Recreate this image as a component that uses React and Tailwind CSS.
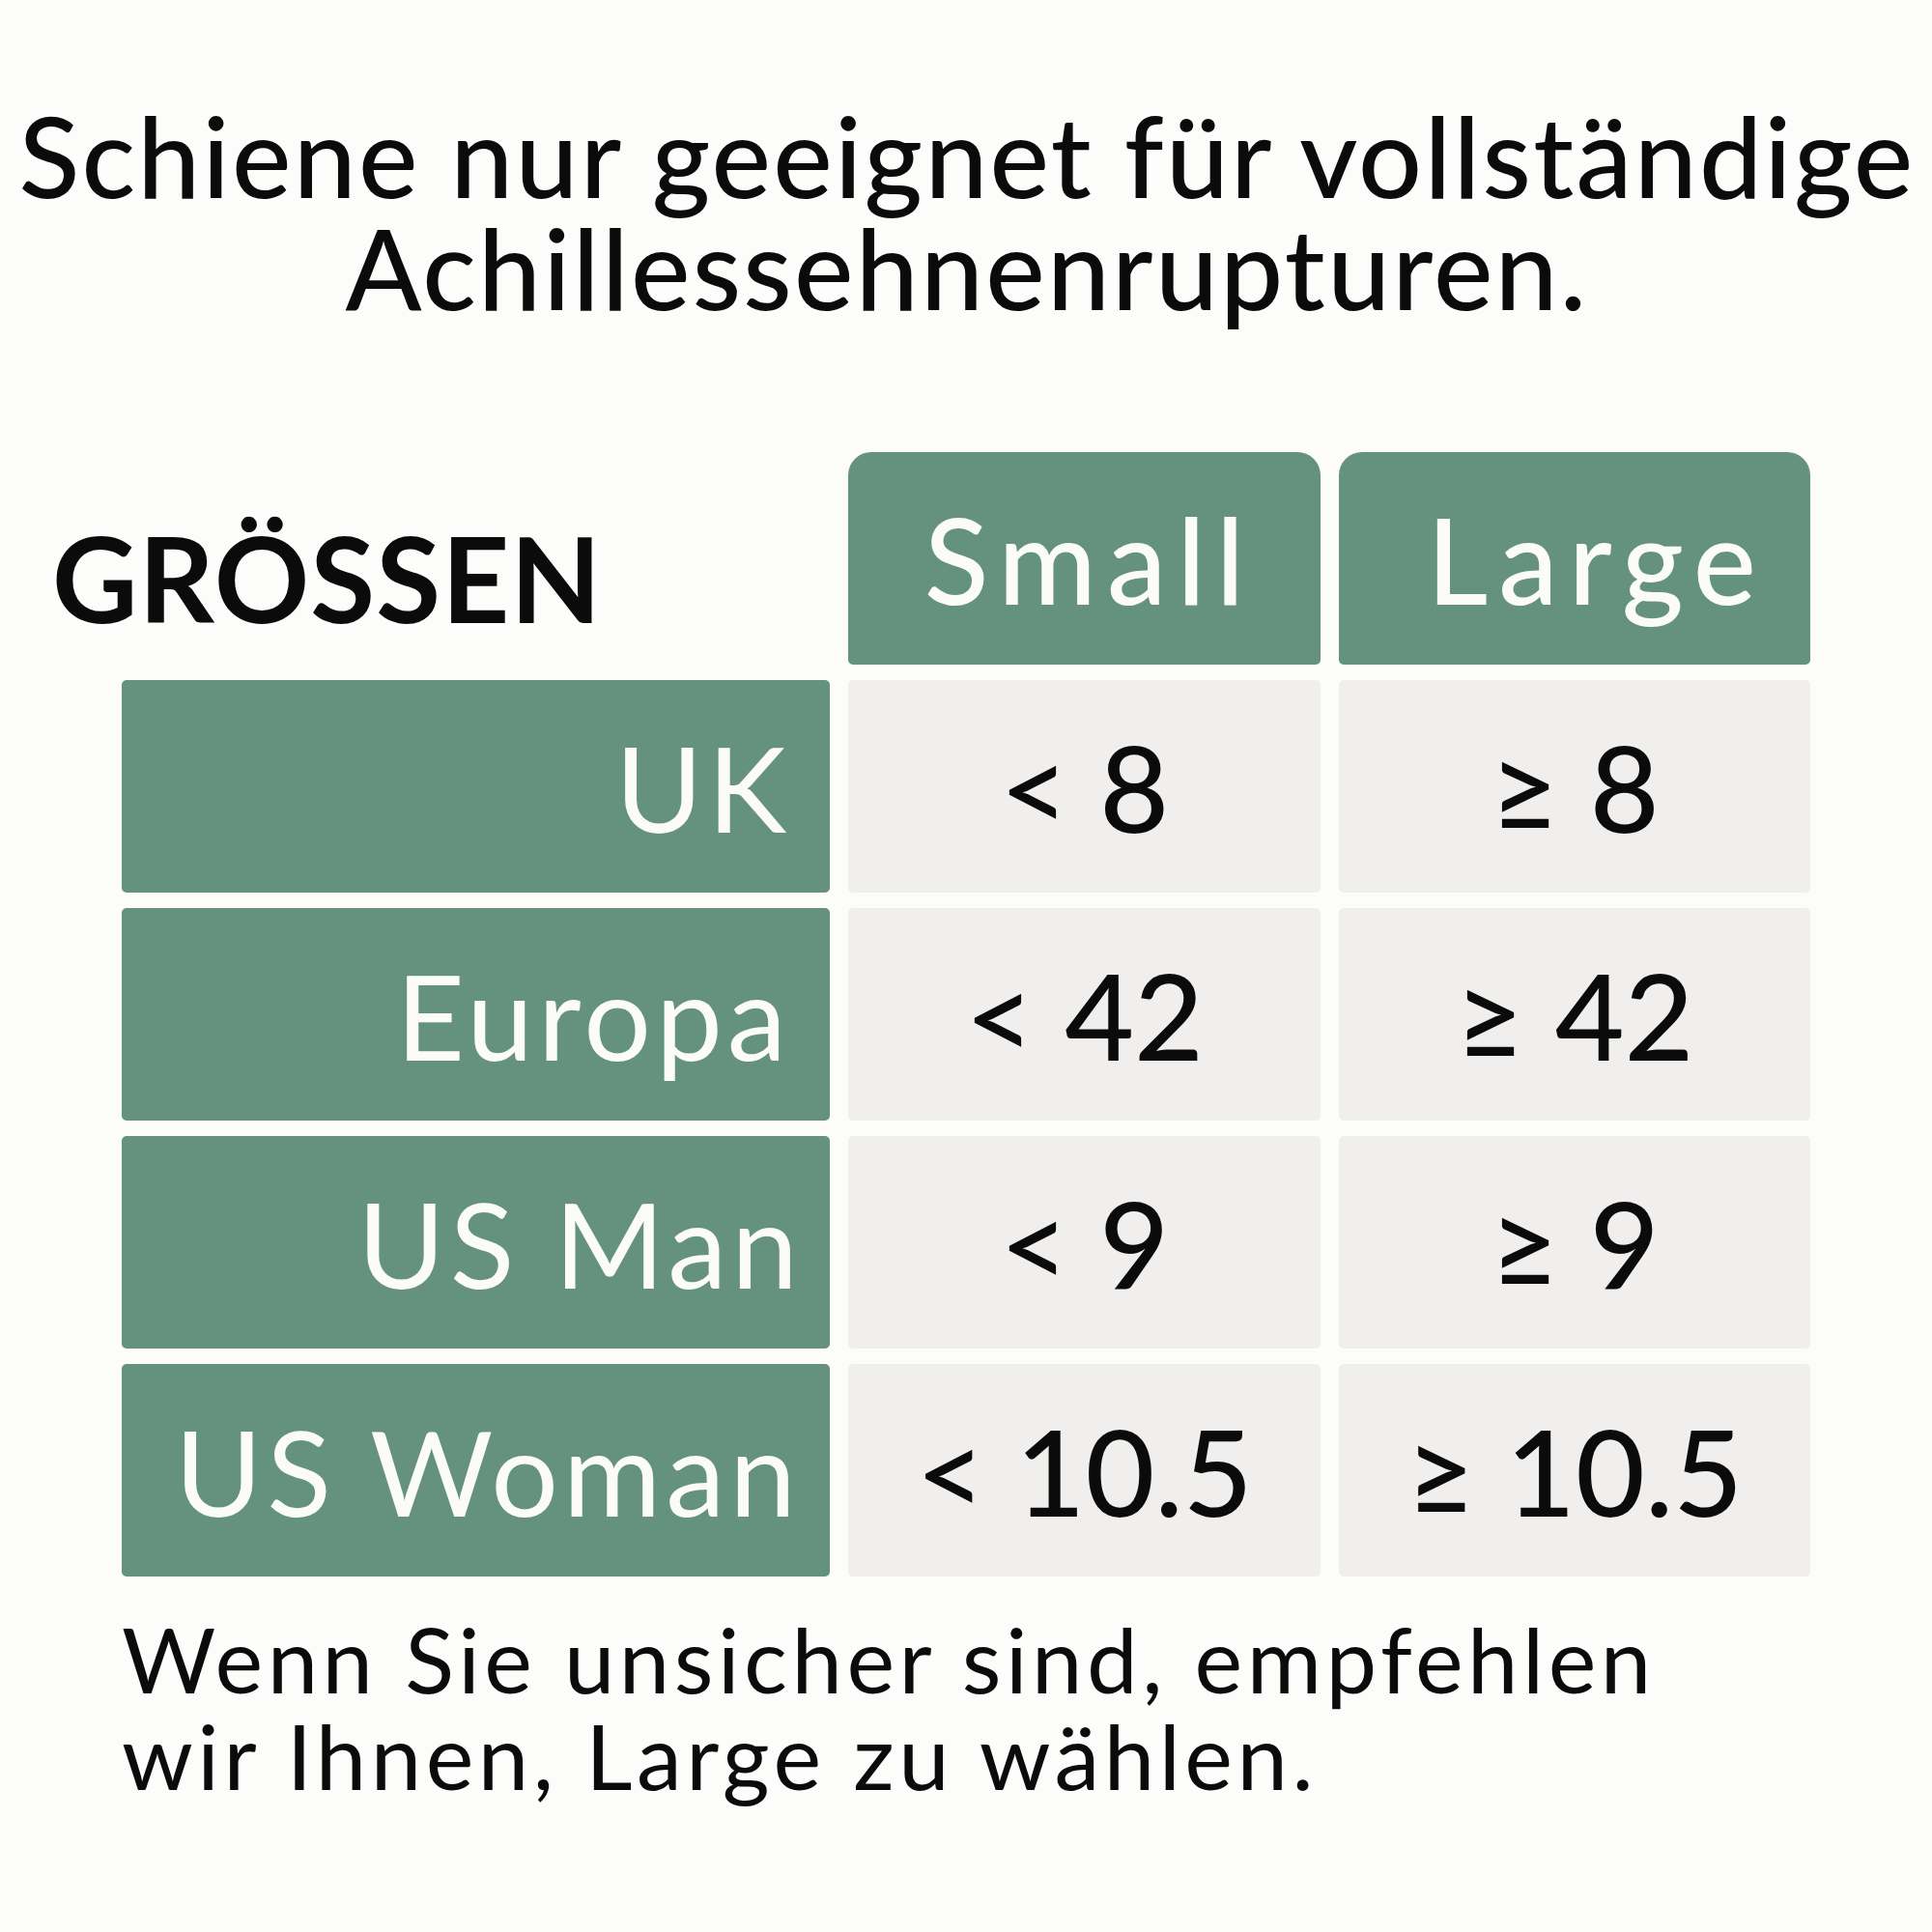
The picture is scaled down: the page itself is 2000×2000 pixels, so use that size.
const ROWS = [
  { label: 'UK', pad: 'pr-[40px]', small: '< 8', large: '≥ 8' },
  { label: 'Europa', pad: 'pr-[40px]', small: '< 42', large: '≥ 42' },
  { label: 'US Man', pad: 'pr-[28px]', small: '< 9', large: '≥ 9' },
  { label: 'US Woman', pad: 'pr-[30px]', small: '< 10.5', large: '≥ 10.5' },
];

export default function App() {
  return (
    <div className="w-[2000px] h-[2000px] bg-[#fcfcfb] text-[#0b0b0b] font-['Lato','Liberation_Sans',sans-serif]">
      <h1 className="pt-[103px] pl-[2px] text-center text-[116px] leading-[116px] tracking-[2.3px] font-medium">
        Schiene nur geeignet für vollständige
        <br />
        Achillessehnenrupturen.
      </h1>

      <div className="mt-[133px] ml-[54px] grid grid-cols-[805px_489px_488px] auto-rows-[220px] gap-x-[19px] gap-y-[16px]">
        <div className="flex items-center pt-[40px] text-[122px] font-bold tracking-[1px] leading-none">GRÖSSEN</div>
        <div className="flex items-center justify-center pl-[11px] rounded-t-[24px] rounded-b-[5px] bg-[#659180] text-[123px] leading-none tracking-[11px] font-medium text-[#fbfbf7]">
          Small
        </div>
        <div className="flex items-center justify-center pl-[46px] rounded-t-[24px] rounded-b-[5px] bg-[#659180] text-[123px] leading-none tracking-[11px] font-medium text-[#fbfbf7]">
          Large
        </div>

        {ROWS.map((r) => (
          <div key={r.label} className="contents">
            <div className={`ml-[72px] flex items-center justify-end ${r.pad} rounded-[5px] bg-[#659180] text-[123px] leading-none tracking-[5px] text-[#fbfbf7]`}>
              {r.label}
            </div>
            <div className="flex items-center justify-center rounded-[5px] bg-[#f0efee] text-[124px] leading-none font-medium">
              {r.small}
            </div>
            <div className="flex items-center justify-center rounded-[5px] bg-[#f0efee] text-[124px] leading-none font-medium">
              {r.large}
            </div>
          </div>
        ))}
      </div>

      <p className="mt-[35px] ml-[126px] text-[94px] leading-[100px] tracking-[4.5px]">
        Wenn Sie unsicher sind, empfehlen
        <br />
        wir Ihnen, Large zu wählen.
      </p>
    </div>
  );
}
